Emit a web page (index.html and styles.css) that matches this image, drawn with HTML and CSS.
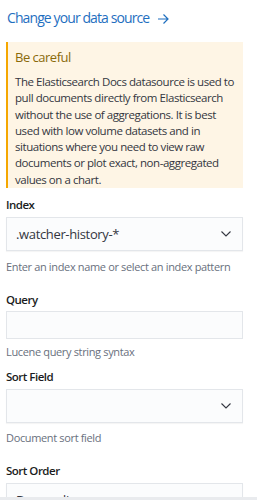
FILE: index.html
```html
<!DOCTYPE html>
<html lang="en">
<head>
    <meta charset="UTF-8">
    <meta name="viewport" content="width=device-width, initial-scale=1.0">
    <title>Elasticsearch Docs datasource</title>
    <link rel="stylesheet" href="styles.css">
</head>
<body>

<div class="panel">
    <!-- Change data source link -->
    <a class="source-link" href="#">Change your data source
        <svg class="arrow" width="12" height="12" viewBox="0 0 12 12">
            <path d="M1 6h10M6.5 1.5L11 6l-4.5 4.5" fill="none" stroke="currentColor" stroke-width="1.2"/>
        </svg>
    </a>

    <!-- Warning callout -->
    <div class="callout">
        <div class="callout-title">Be careful</div>
        <p class="callout-text">The Elasticsearch Docs datasource is used to pull documents directly from Elasticsearch without the use of aggregations. It is best used with low volume datasets and in situations where you need to view raw documents or plot exact, non-aggregated values on a chart.</p>
    </div>

    <!-- Index -->
    <div class="form-row row-index">
        <label class="form-label">Index</label>
        <div class="select-box">
            <span class="select-value">.watcher-history-*</span>
            <svg class="chevron" width="10" height="6" viewBox="0 0 10 6">
                <path d="M0.5 0.5l4.5 4.5 4.5-4.5" fill="none" stroke="currentColor" stroke-width="1.1"/>
            </svg>
        </div>
        <div class="form-help">Enter an index name or select an index pattern</div>
    </div>

    <!-- Query -->
    <div class="form-row row-query">
        <label class="form-label">Query</label>
        <input class="text-input" type="text">
        <div class="form-help">Lucene query string syntax</div>
    </div>

    <!-- Sort Field -->
    <div class="form-row row-sort-field">
        <label class="form-label">Sort Field</label>
        <div class="select-box">
            <span class="select-value"></span>
            <svg class="chevron" width="10" height="6" viewBox="0 0 10 6">
                <path d="M0.5 0.5l4.5 4.5 4.5-4.5" fill="none" stroke="currentColor" stroke-width="1.1"/>
            </svg>
        </div>
        <div class="form-help">Document sort field</div>
    </div>

    <!-- Sort Order -->
    <div class="form-row row-sort-order">
        <label class="form-label">Sort Order</label>
        <div class="select-box">
            <span class="select-value">Descending</span>
            <svg class="chevron" width="10" height="6" viewBox="0 0 10 6">
                <path d="M0.5 0.5l4.5 4.5 4.5-4.5" fill="none" stroke="currentColor" stroke-width="1.1"/>
            </svg>
        </div>
    </div>
</div>

<div class="bottom-bar"></div>

</body>
</html>
```

FILE: styles.css
```css
/* Global Styling */
* {
    margin: 0;
    padding: 0;
    box-sizing: border-box;
    font-family: "Open Sans", sans-serif;
}

body {
    background-color: #fff;
    color: #343741;
    overflow: hidden;
}

.panel {
    width: 237px;
    margin-left: 6px;
    padding-top: 8px;
}

/* Link */
.source-link {
    display: flex;
    align-items: center;
    gap: 8px;
    padding-left: 1px;
    font-size: 14px;
    letter-spacing: -0.9px;
    line-height: 20px;
    color: #1f6fbf;
    text-decoration: none;
}

.source-link .arrow {
    margin-top: 1px;
}

/* Callout */
.callout {
    margin-top: 14px;
    background-color: #fef5e5;
    border-left: 2px solid #f5a700;
    padding: 6px 6px 0 7px;
}

.callout-title {
    font-size: 13px;
    letter-spacing: -0.5px;
    line-height: 18px;
    color: #8a6a0a;
}

.callout-text {
    margin-top: 8px;
    font-size: 11.5px;
    letter-spacing: -0.45px;
    line-height: 16.3px;
    color: #343741;
}

/* Form rows */
.form-row {
    display: flex;
    flex-direction: column;
}

.row-index {
    margin-top: 9px;
}

.row-query {
    margin-top: 17px;
}

.row-sort-field {
    margin-top: 9px;
}

.row-sort-order {
    margin-top: 17px;
}

.form-label {
    font-size: 11.5px;
    font-weight: 600;
    letter-spacing: -0.5px;
    line-height: 16px;
    color: #1a1c21;
}

.select-box {
    margin-top: 4px;
    height: 34px;
    display: flex;
    align-items: center;
    justify-content: space-between;
    padding: 0 11px 0 9px;
    background-color: #fbfcfd;
    border: 1px solid #e3e6ea;
    box-shadow: 0 1px 1px rgba(0, 0, 0, 0.04);
}

.select-value {
    font-size: 13px;
    letter-spacing: -0.35px;
    color: #343741;
}

.chevron {
    color: #343741;
}

.text-input {
    margin-top: 3px;
    height: 28px;
    width: 100%;
    background-color: #fbfcfd;
    border: 1px solid #e3e6ea;
    outline: none;
}

.form-help {
    font-size: 11px;
    letter-spacing: -0.35px;
    line-height: 16px;
    color: #69707d;
    margin-top: 8px;
}

.row-query .form-help {
    margin-top: 5px;
}

.row-sort-field .form-help {
    margin-top: 7px;
}

.bottom-bar {
    position: fixed;
    left: 0;
    right: 0;
    bottom: 0;
    height: 3px;
    background-color: #e9ebee;
}
```
